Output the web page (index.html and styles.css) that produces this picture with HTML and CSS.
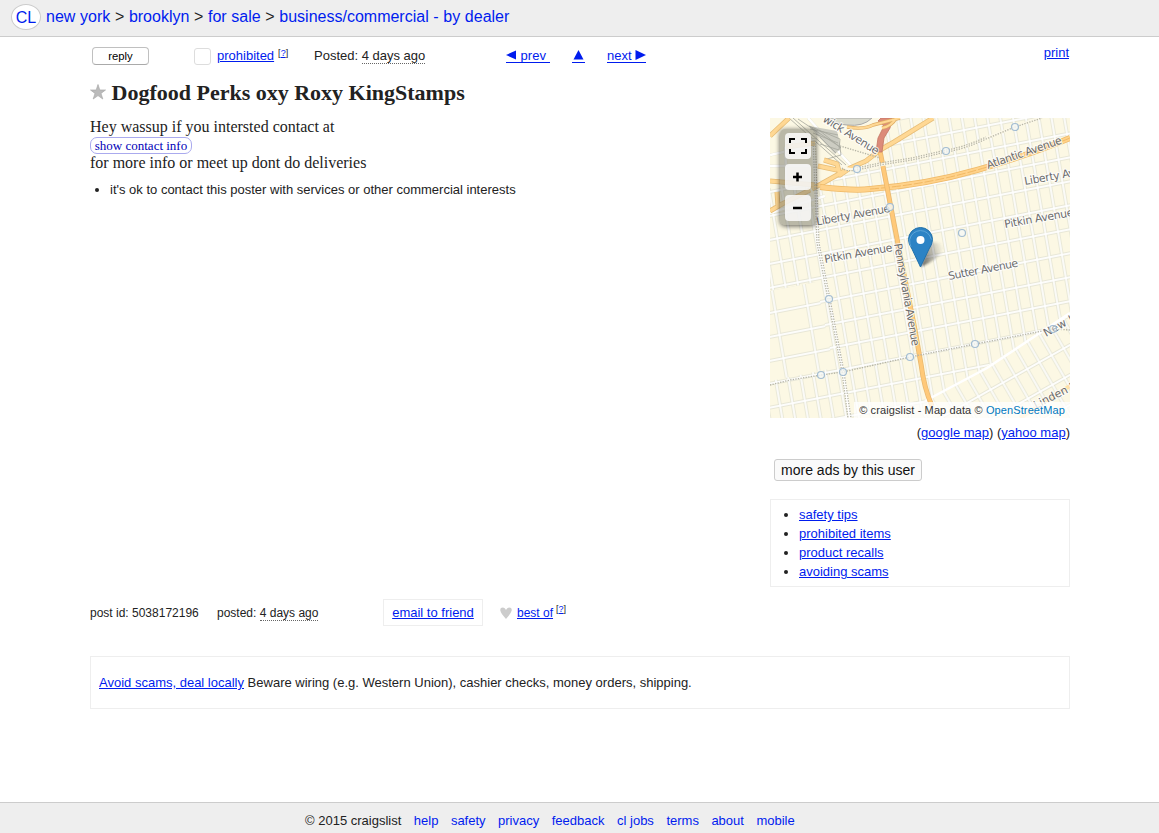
FILE: index.html
```
<!DOCTYPE html>
<html lang="en">
<head>
<meta charset="utf-8">
<title>Dogfood Perks oxy Roxy KingStamps</title>
<link rel="stylesheet" href="styles.css">
</head>
<body>
<header class="crumbs"><a class="logo" href="#">CL</a><nav><a href="#">new york</a> &gt; <a href="#">brooklyn</a> &gt; <a href="#">for sale</a> &gt; <a href="#">business/commercial - by dealer</a></nav></header>
<main class="page">
  <div class="toolbar">
    <button class="reply">reply</button>
    <div class="flag"><span class="box"></span><a href="#">prohibited</a><sup>[<a href="#">?</a>]</sup></div>
    <div class="date">Posted: <time>4 days ago</time></div>
    <a class="arrow" href="#"><svg width="11" height="10"><path d="M0 5 10 .5v9z"/></svg><span>&nbsp;prev&nbsp;</span></a>
    <a class="arrow up" href="#"><svg width="13" height="10"><path d="M1.500 9.500 6.500 0l5 9.500z"/></svg></a>
    <a class="arrow" href="#"><span>next&nbsp;</span><svg width="11" height="10"><path d="M.5 0 11 5 .5 10z"/></svg></a>
    <a class="print" href="#">print</a>
  </div>
  <h2 class="title"><svg class="star" width="16" height="16" viewBox="0 0 16 16"><path d="M8 .5 9.800 6h5.700l-4.500 3.400 1.800 5.600L8 11.600 3.200 15 5 9.400.5 6h5.700z"/></svg><span>Dogfood Perks oxy Roxy KingStamps</span></h2>
  <div class="content">
    <section class="posting">
      <p>Hey wassup if you intersted contact at</p>
      <a class="contact" href="#">show contact info</a>
      <p>for more info or meet up dont do deliveries</p>
      <ul class="notices"><li>it's ok to contact this poster with services or other commercial interests</li></ul>
    </section>
    <aside class="side">
      <div class="map">
        <svg width="300" height="300" viewBox="0 0 300 300">
          <defs>
            <pattern id="blocks" width="12.4" height="23.2" patternUnits="userSpaceOnUse" patternTransform="matrix(1 -.195 .17 1 0 2)">
              <rect width="12.4" height="23.200" fill="#fff"/><rect x="1.200" y="1.300" width="10" height="20.600" fill="#fcf8e4" stroke="#e2e2d0" stroke-width=".8"/>
            </pattern>
            <pattern id="wide" width="32" height="23.2" patternUnits="userSpaceOnUse" patternTransform="matrix(1 -.195 .17 1 6 2)">
              <rect width="32" height="23.200" fill="#fff"/><rect x="1.200" y="1.300" width="29.600" height="20.600" fill="#fcf8e4" stroke="#e2e2d0" stroke-width=".8"/>
            </pattern>
            <pattern id="diag" width="14" height="26" patternUnits="userSpaceOnUse" patternTransform="matrix(.87 -.49 .5 .87 3 5)">
              <rect width="14" height="26" fill="#fff"/><rect x="1.200" y="1.300" width="11.600" height="23.400" fill="#fcf8e4" stroke="#e2e2d0" stroke-width=".8"/>
            </pattern>
          </defs>
          <rect width="300" height="300" fill="url(#blocks)"/>
          <path d="M0 173 46 164 64 250 0 263z" fill="url(#wide)"/>
          <path d="M300 195 217 248 158 283 150 300H300z" fill="url(#diag)"/>
          <path d="M0 0H109V32L82 53 54 62 0 70z" fill="#fcf8e4"/>
          <g fill="none" stroke="#e3e2cf" stroke-width="3"><path d="M0 48H40M0 37 45 27M38 0 86 53M0 95 55 78M15 29 17 70"/></g>
          <g fill="none" stroke="#fff" stroke-width="2.500"><path d="M0 48H40M0 37 45 27M38 0 86 53M0 95 55 78M15 29 17 70M300 195 217 250 155 283"/></g>
          <path d="M57 0Q63 6 77 7 93 9 102 0Z" fill="#d9dacd" stroke="#aaa"/>
          <path d="M39 8 67 13 71 30 65 36 48 18z" fill="#ccccc2"/>
          <g fill="none" stroke="#a5a69c" stroke-width=".8"><path d="M19 0 72 47M23 0 76 47M28 1 70 29 71 37 57 41M39 8 70 21 69 32 50 26M40 11 68 17M43 15 68 25M50 19 66 35M49 12 71 30"/></g>
          <g fill="none" stroke="#fff" stroke-width="3"><path d="M43 20 48 125 59 181 73 254 80 300"/></g>
          <g fill="none" stroke="#e7bd77" stroke-width="5" stroke-linejoin="round"><path d="M0 18 19 0M16 29 45 25M54 42 67 46 70 57 80 50 96 43 110 32 124 24 163 0M48 48 67 52M42 71 78 51M0 63 45 67 M0 93 12 86 40 72M7 74 8 88"/></g>
          <g fill="none" stroke="#ffd894" stroke-width="3.500" stroke-linejoin="round"><path d="M0 18 19 0M16 29 45 25M54 42 67 46 70 57 80 50 96 43 110 32 124 24 163 0M48 48 67 52M42 71 78 51M0 63 45 67 M0 93 12 86 40 72M7 74 8 88"/></g>
          <path d="M50 69Q85 73 100 71Q155 67 207 52T300 20" fill="none" stroke="#efb967" stroke-width="6"/>
          <path d="M50 69Q85 73 100 71Q155 67 207 52T300 20" fill="none" stroke="#ffd28a" stroke-width="4.500"/>
          <path d="M100 71Q155 67 207 52T300 20" fill="none" stroke="#f1b965" stroke-width="1" stroke-dasharray="9 2"/>
          <path d="M110 33 128 126 145 212 151 246Q154 270 162 288" fill="none" stroke="#e8b76f" stroke-width="5"/>
          <path d="M110 33 128 126 145 212 151 246Q154 270 162 288" fill="none" stroke="#ffc979" stroke-width="3.500"/>
          <path d="M106 34 108 20 114 8 108 3 111 0 122 0 120 10 114 20 112 34z" fill="#dc8b7a" stroke="#c37562" stroke-width=".8"/>
          <g fill="none"><path d="M77 9Q93 12 103 7L130 0M112 10Q122 8 126 0" stroke="#dfad64" stroke-width="3.500"/><path d="M77 9Q93 12 103 7L130 0M112 10Q122 8 126 0" stroke="#ffd894" stroke-width="2"/></g>
          <path d="M72 47Q76 53 87 51L110 47 142 41 176 33Q195 31 216 20L245 9 270 0" fill="none" stroke="#fcf8e8" stroke-width="3"/>
          <g fill="none" stroke="#b5b4a5" stroke-width="1.300" stroke-dasharray="1.300 1.300"><path d="M72 50Q76 54 87 52L110 47 142 42 176 34Q195 31 216 21L245 9 272 0M87 50 110 45 142 40 176 32Q195 29 216 19M43 20 47 125 58 181 72 254 78 300M45 20 49 125 60 181 74 254 81 300M70 28 110 40M0 267 20 262 51 257 73 254 140 239 205 226 283 211 300 212"/></g>
          <path d="M250 300 300 268" stroke="#ffe1a8" stroke-width="4"/>
          <g class="labels" fill="#6c6c6c" stroke="#fff" stroke-opacity=".75" stroke-width="2">
            <text transform="translate(52 3) rotate(32)" textLength="64">wick Avenue</text>
            <text transform="translate(218 51) rotate(-19)" textLength="79">Atlantic Avenue</text>
            <text transform="translate(255 67) rotate(-10)" textLength="77">Liberty Avenue</text>
            <text transform="translate(47 107.500) rotate(-10.500)" textLength="75">Liberty Avenue</text>
            <text transform="translate(235 110) rotate(-10)" textLength="70">Pitkin Avenue</text>
            <text transform="translate(55 145) rotate(-10)" textLength="69">Pitkin Avenue</text>
            <text transform="translate(179 162) rotate(-11)" textLength="71">Sutter Avenue</text>
            <text transform="translate(124 126) rotate(80)" textLength="104">Pennsylvania Avenue</text>
            <text transform="translate(276 219) rotate(-29)" textLength="52">New Lots</text>
            <text transform="translate(266 291) rotate(-27)" textLength="64">Linden Blvd</text>
          </g>
          <g fill="#f5f7f5" fill-opacity=".8" stroke="#a3bdd2" stroke-width="1.200"><circle cx="87" cy="51" r="3.500"/><circle cx="176" cy="33" r="3.500"/><circle cx="245" cy="9" r="3.500"/><circle cx="120" cy="89" r="3.500"/><circle cx="192" cy="115" r="3.500"/><circle cx="59" cy="181" r="3.500"/><circle cx="51" cy="257" r="3.500"/><circle cx="73" cy="254" r="3.500"/><circle cx="140" cy="239" r="3.500"/><circle cx="205" cy="226" r="3.500"/><circle cx="283" cy="211" r="3.500" fill-opacity=".4"/></g>
          <g transform="translate(138 109)"><defs><linearGradient id="shade" x1="0" x2="1" y1=".6" y2=".3"><stop stop-color="#222" stop-opacity=".65"/><stop offset="1" stop-color="#555" stop-opacity="0"/></linearGradient><filter id="soft" x="-50%" y="-50%" width="200%" height="200%"><feGaussianBlur stdDeviation="1.3"/></filter></defs><path d="M13 40 21 16Q34 14 36 20 33 31 13 40Z" fill="url(#shade)" filter="url(#soft)"/><path d="M12.500 40 4 22Q.5 17 .5 12.500A12 12 0 0 1 24.500 12.500Q24.500 17 21 22Z" fill="#2c83c5" stroke="#2170aa"/><path d="M3 20Q1.500 17 1.700 12.500A11 11 0 0 1 23.300 12.500" fill="none" stroke="#5ba4d8"/><circle cx="12.500" cy="13" r="4" fill="#fff"/></g>
        </svg>
        <div class="controls">
          <button aria-label="Full screen"><svg width="20" height="18" viewBox="0 0 20 18"><path d="M2 6V2h5M13 2h5v4M18 12v4h-5M7 16H2v-4"/></svg></button>
          <button aria-label="Zoom in"><svg width="20" height="18" viewBox="0 0 20 18"><path d="M5 9h9M9.500 4.500v9" stroke-width="2.500"/></svg></button>
          <button aria-label="Zoom out"><svg width="20" height="18" viewBox="0 0 20 18"><path d="M5 9h9" stroke-width="2.500"/></svg></button>
        </div>
        <div class="credit">© craigslist - Map data © <a href="#">OpenStreetMap</a></div>
      </div>
      <p class="maplinks">(<a href="#">google map</a>) (<a href="#">yahoo map</a>)</p>
      <button class="more">more ads by this user</button>
      <ul class="tips"><li><a href="#">safety tips</a></li><li><a href="#">prohibited items</a></li><li><a href="#">product recalls</a></li><li><a href="#">avoiding scams</a></li></ul>
    </aside>
  </div>
  <div class="info">
    <span class="pid">post id: 5038172196</span><span class="posted">posted: <time>4 days ago</time></span>
    <a class="email" href="#">email to friend</a>
    <div class="best"><svg width="12" height="12" viewBox="0 0 12 12"><path d="M6 12Q1 6.500.3 3.500 0 .5 3 .5 5 .5 6 3 7 .5 9 .5 12 .5 11.700 3.500 11 6.500 6 12Z"/></svg><a href="#">best of</a><sup>[<a href="#">?</a>]</sup></div>
  </div>
  <p class="warning"><span><a href="#">Avoid scams, deal locally</a> Beware wiring (e.g. Western Union), cashier checks, money orders, shipping.</span></p>
</main>
<footer class="foot"><span>© 2015 craigslist</span><a href="#">help</a><a href="#">safety</a><a href="#">privacy</a><a href="#">feedback</a><a href="#">cl jobs</a><a href="#">terms</a><a href="#">about</a><a href="#">mobile</a></footer>
</body>
</html>
```
FILE: styles.css
```
* { box-sizing: border-box; }
body { margin: 0; height: 833px; display: flex; flex-direction: column; overflow: hidden; background: #fff; color: #222; font: 13px/18px "Liberation Sans", Arial, sans-serif; }
a { color: #001cee; }
p, ul, h2 { margin: 0; padding: 0; }
button { font-family: inherit; padding: 0; }
svg { display: block; }

.crumbs { height: 37px; flex: none; display: flex; align-items: flex-start; padding: 4px 0 0 11px; background: #eee; border-bottom: 1px solid #ccc; font-size: 16px; }
.crumbs a { text-decoration: none; }
.crumbs nav { margin: 4px 0 0 5px; white-space: nowrap; word-spacing: .2px; }
.logo { width: 30px; height: 26px; border: 1px solid #ccc; border-radius: 50%; background: #fff; text-align: center; line-height: 26px; }

.page { width: 980px; margin-left: 90px; flex: 1; }
.toolbar { height: 38px; display: grid; grid-template-columns: 104px 120px 192px 66px 35px 1fr auto; align-items: center; }
.reply { margin-left: 2px; width: 57px; height: 18px; border: 1px solid #c0c0c0; border-bottom-color: #aaa; border-radius: 4px; background: #fff; font-size: 11.3px; line-height: 15px; color: #000; }
.flag { display: flex; align-items: center; }
.box { width: 17px; height: 17px; border: 1px solid #ddd; border-radius: 3px; margin-right: 6px; }
sup { font-size: 9px; line-height: 10px; margin: -7px 0 0 4px; vertical-align: baseline; }
time { border-bottom: 1px dotted #666; }
.arrow { display: flex; align-items: center; justify-self: start; height: 14px; border-bottom: 1px solid #001cee; text-decoration: none; line-height: 13px; }
.arrow svg { fill: #001cee; margin-top: -2px; }
.print { margin: -6px 1px 0 0; }

.title { display: flex; height: 43px; padding-top: 6px; font: bold 22px/24px "Liberation Serif", "Times New Roman", serif; }
.star { margin: 3px 5.5px 0 0; fill: #bbb; stroke: #aaa; stroke-width: .7; }
.content { display: flex; justify-content: space-between; height: 481px; }
.posting { font: 16px/18px "Liberation Serif", "Times New Roman", serif; }
.contact { display: block; width: 102px; height: 17px; margin: 1px 0 0; border: 1px solid #aaaaee; border-radius: 7px; font-size: 13px; line-height: 16px; text-align: center; color: #0000b8; text-decoration: none; white-space: nowrap; }
.notices { padding-left: 20px; margin-top: 9px; font: 13px/18px "Liberation Sans", Arial, sans-serif; }
.side { width: 300px; }
.map { position: relative; height: 300px; overflow: hidden; }
.labels text { font: 11px "DejaVu Sans", sans-serif; paint-order: stroke; }
.controls { position: absolute; left: 10px; top: 11px; width: 36px; height: 96px; padding: 4px 5px; display: grid; gap: 5px; border-radius: 5px; background: rgba(120,120,105,.5); box-shadow: 0 1px 5px rgba(0,0,0,.65); }
.controls button { width: 26px; height: 26px; border: 0; border-radius: 4px; background: rgba(255,255,255,.82); display: grid; place-items: center; }
.controls svg { fill: none; stroke: #000; stroke-width: 2; }
.credit { position: absolute; right: 0; bottom: 0; height: 16px; padding: 0 5px; background: rgba(255,255,255,.75); font-size: 11px; line-height: 17px; color: #333; white-space: nowrap; letter-spacing: .11px; }
.credit a { color: #0078c0; text-decoration: none; }
.maplinks { margin-top: 6px; text-align: right; }
.more { display: block; width: 148px; height: 22px; margin: 17px 0 18px 4px; border: 1px solid #ccc; border-radius: 3px; background: #fafafa; color: #111; font-size: 14px; line-height: 20px; white-space: nowrap; }
.tips { height: 88px; border: 1px solid #eee; padding: 5px 0 0 28px; line-height: 19px; }

.info { height: 27px; display: flex; align-items: center; font-size: 13px; }
.pid, .posted { font-size: 12px; }
.pid { width: 127px; }
.posted { width: 166px; }
.email { width: 100px; height: 27px; border: 1px solid #eee; text-align: center; line-height: 25px; }
.best { display: flex; align-items: center; margin-left: 17px; font-size: 12px; }
.best svg { fill: #ccc; margin-right: 5px; }
.best sup { margin-left: 3px; }
.warning { height: 53px; margin-top: 30px; border: 1px solid #eee; padding: 17px 8px; }

.foot { height: 31px; flex: none; display: flex; gap: 12.5px; padding: 9px 0 0 305px; background: #eee; border-top: 1px solid #ccc; }
.foot a { text-decoration: none; }
```
